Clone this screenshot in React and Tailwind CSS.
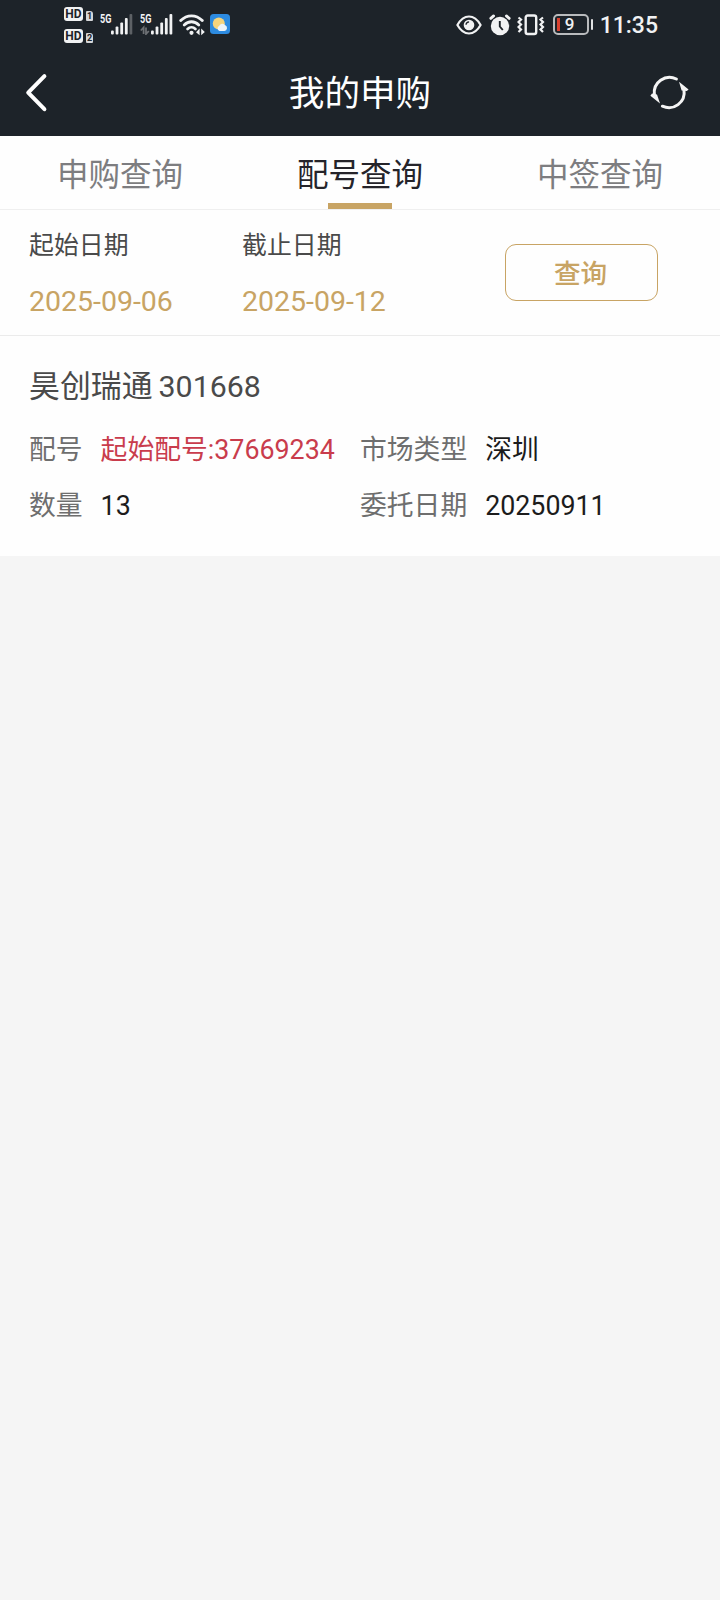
import React from 'react'

const tabs = [
  { key: 'apply', label: '申购查询' },
  { key: 'allot', label: '配号查询' },
  { key: 'win', label: '中签查询' },
]

const record = {
  name: '昊创瑞通',
  code: '301668',
  allotNo: '起始配号:37669234',
  market: '深圳',
  amount: '13',
  date: '20250911',
}

function HdBadge({ n }) {
  return (
    <div className="flex items-end gap-[3px]">
      <div className="flex h-[14px] w-[19px] items-center justify-center rounded-[3px] bg-[#f1f2f3] text-[12px] font-bold leading-none text-[#1d2329]">
        HD
      </div>
      <div className="flex h-[10px] w-[7px] items-center justify-center rounded-[1px] rounded-tr-[3px] bg-[#d5d7d9] text-[9px] font-bold leading-none text-[#1d2329]">
        {n}
      </div>
    </div>
  )
}

function Signal({ dimLast, data }) {
  return (
    <div className="relative h-[21px] w-[33px]">
      <span className="absolute left-0 top-0 origin-left scale-x-[0.7] text-[13px] font-bold leading-[10px] text-[#f1f2f3]">5G</span>
      <svg className="h-[21px] w-[33px]" viewBox="0 0 33 21">
        <g fill="#f1f2f3">
          <rect x="11" y="16.5" width="2.8" height="4" rx="1" />
          <rect x="15.6" y="12.5" width="2.8" height="8" rx="1" />
          <rect x="20.3" y="8.5" width="2.8" height="12" rx="1" />
          <rect x="24.9" y="4" width="2.8" height="16.5" rx="1" />
          <rect x="29.5" y="0" width="2.8" height="20.5" rx="1" opacity={dimLast ? 0.3 : 1} />
        </g>
        {data && (
          <g stroke="#6d7074" strokeWidth="1.8" fill="none">
            <path d="M3.6 20V13.5L0.8 16.5M6 13.5V20L8.8 17" />
          </g>
        )}
      </svg>
    </div>
  )
}

function Wifi() {
  return (
    <svg className="h-[22px] w-[26px]" viewBox="0 0 26 22">
      <g fill="none" stroke="#f1f2f3" strokeWidth="2.8" strokeLinecap="round">
        <path d="M1.7 6.6C8 .2 17 .2 23.3 6.6" />
        <path d="M5.2 10.9c4.2-4.2 10.4-4.2 14.6 0" />
        <path d="M8.6 15c2.3-2.3 5.5-2.3 7.8 0" />
      </g>
      <circle cx="12.5" cy="18.8" r="2.1" fill="#f1f2f3" />
      <path d="M20.6 14.6v6.6l-3.6-3zM22.2 14.6v6.6l3.6-3.2z" fill="#f1f2f3" />
    </svg>
  )
}

function Weather() {
  return (
    <svg className="h-5 w-5" viewBox="0 0 20 20">
      <rect width="20" height="20" rx="3.5" fill="#2d8be0" />
      <circle cx="8.8" cy="9.4" r="6" fill="#f5d47c" />
      <path d="M9.4 17a2.7 2.7 0 0 1-.3-5 3.5 3.5 0 0 1 6.2-.7A3 3 0 0 1 14.4 17z" fill="#edf3f8" />
    </svg>
  )
}

function Eye() {
  return (
    <svg className="h-5 w-[26px]" viewBox="0 0 26 20">
      <path d="M1.4 10C4.6 4.3 8.6 1.5 13 1.5S21.4 4.3 24.6 10C21.4 15.7 17.4 18.5 13 18.5S4.6 15.7 1.4 10z" fill="none" stroke="#f1f2f3" strokeWidth="2.2" strokeLinejoin="round" />
      <circle cx="13" cy="10" r="5.3" fill="#f1f2f3" />
      <path d="M10 9.8a3.2 3.2 0 0 1 3.1-3" fill="none" stroke="#1d2329" strokeWidth="1.3" />
    </svg>
  )
}

function Alarm() {
  return (
    <svg className="h-[22px] w-[22px]" viewBox="0 0 22 22">
      <circle cx="11" cy="12" r="9.2" fill="#f1f2f3" />
      <path d="M1.8 4.4L4.6 1.9M20.2 4.4L17.4 1.9" stroke="#f1f2f3" strokeWidth="2.8" strokeLinecap="round" />
      <path d="M10.8 7v5.5l3 3.5" fill="none" stroke="#1d2329" strokeWidth="1.9" />
    </svg>
  )
}

function Vibrate() {
  return (
    <svg className="h-[22px] w-7" viewBox="0 0 28 22">
      <rect x="8.7" y="1.5" width="10.5" height="18.5" rx="2" fill="none" stroke="#f1f2f3" strokeWidth="2.4" />
      <path d="M1.5 3.5l2.5 2L1.5 8 4 10.500 1.500 13 4 15.500 1.500 18M26 3.500l-2.500 2L26 8l-2.500 2.500L26 13l-2.500 2.500L26 18" fill="none" stroke="#f1f2f3" strokeWidth="2.2" />
    </svg>
  )
}

function Battery() {
  return (
    <div className="flex items-center gap-[2px]">
      <div className="flex h-[21px] w-9 items-center rounded-[5px] border-2 border-[#b9bbbd] pl-[2px]">
        <div className="h-[13px] w-[3px] bg-[#d9402f]" />
        <span className="ml-[5px] text-[17px] font-medium leading-none text-[#f1f2f3]">9</span>
      </div>
      <div className="h-[11px] w-[2px] rounded-sm bg-[#e0e1e2]" />
    </div>
  )
}

function StatusBar() {
  return (
    <div className="flex h-[49px] items-start justify-between pl-[64px] pr-[62px]">
      <div className="flex">
        <div className="mt-[7px] flex flex-col gap-[8px]">
          <HdBadge n="1" />
          <HdBadge n="2" />
        </div>
        <div className="ml-[7px] mt-[14px] flex">
          <Signal dimLast />
          <div className="ml-[7px]"><Signal data /></div>
          <div className="ml-[6px]"><Wifi /></div>
          <div className="ml-[5px]"><Weather /></div>
        </div>
      </div>
      <div className="mt-[14px] flex h-[21px] items-center">
        <Eye />
        <div className="ml-[7px]"><Alarm /></div>
        <div className="ml-[6px]"><Vibrate /></div>
        <div className="ml-[8px]"><Battery /></div>
        <span className="ml-[7px] pt-[2px] text-[23px] font-medium leading-none text-[#f1f2f3]">11:35</span>
      </div>
    </div>
  )
}

function Header() {
  return (
    <div className="flex h-[87px] items-center justify-between pl-[25px] pr-[31px] text-white">
      <svg className="h-10 w-6" viewBox="0 0 24 40" fill="none" stroke="currentColor" strokeWidth="4" strokeLinecap="round" strokeLinejoin="round">
        <path d="M19.4 3.2L3.2 19.7l16.2 16.5" />
      </svg>
      <h1 className="pl-[22px] pt-[5px] text-[35.6px] leading-none">我的申购</h1>
      <svg className="h-10 w-10" viewBox="0 0 40 40" fill="none" stroke="#f4f4f4" strokeWidth="3">
        <path d="M5.4 21.8A15.3 15.3 0 0 1 27.4 6" strokeLinecap="round" />
        <path d="M35 17A15.3 15.3 0 0 1 13.4 33.2" strokeLinecap="round" />
        <path d="M30 8.8l9.6 7.6-1.8 1.6-5.2-.5zM11 30.6L1.4 22.8l1.6-2.2 5 1z" fill="#f4f4f4" stroke="none" />
      </svg>
    </div>
  )
}

function DateField({ label, value }) {
  return (
    <div className="w-[213px]">
      <div className="text-[24.9px] leading-[30px] text-[#4a4a4a]">{label}</div>
      <div className="mt-[26px] text-[28.5px] leading-[30px] text-[#c8a464]">{value}</div>
    </div>
  )
}

function Cell({ label, value, red }) {
  return (
    <div className="flex gap-[18px] whitespace-nowrap">
      <span className="text-[#6e6e6e]">{label}</span>
      <span className={red ? 'text-[#c93c4c]' : 'text-[#1c1c1c]'}>{value}</span>
    </div>
  )
}

export default function App() {
  return (
    <div className="min-h-[1600px] w-[720px] bg-[#f5f5f5] font-[Roboto,'Noto_Sans_CJK_SC',sans-serif]">
      <div className="bg-[#1d2329]">
        <StatusBar />
        <Header />
      </div>

      <div className="grid h-[74px] grid-cols-3 border-b border-[#efefef] bg-[#fefefe]">
        {tabs.map((t) => (
          <div key={t.key} className="flex flex-col items-center justify-between">
            <span className={t.key === 'allot' ? 'pt-[17px] text-[31.5px] leading-[46px] text-[#25242a]' : 'pt-[17px] text-[31.5px] leading-[46px] text-[#7d7d80]'}>
              {t.label}
            </span>
            {t.key === 'allot' && <div className="h-[6px] w-16 bg-[#c8a464]" />}
          </div>
        ))}
      </div>

      <div className="flex h-[126px] items-start border-b border-[#ebebeb] bg-[#fefefe] pl-[29px] pt-[21px]">
        <DateField label="起始日期" value="2025-09-06" />
        <DateField label="截止日期" value="2025-09-12" />
        <button className="ml-[50px] mt-[13px] h-[57px] w-[153px] rounded-[11px] border border-[#c8a464] pr-[2px] pt-[3px] text-[26.6px] font-medium leading-none text-[#c8a464]">
          查询
        </button>
      </div>

      <div className="h-[220px] bg-[#fefefe] pl-[29px] pt-[31px]">
        <div className="flex gap-[6px] leading-[40px] text-[#4a4a4a]">
          <span className="text-[30.9px]">{record.name}</span>
          <span className="text-[30.3px]">{record.code}</span>
        </div>
        <div className="mt-[23px] grid grid-cols-[331px_1fr] gap-y-[16px] text-[26.8px] leading-[40px]">
          <Cell label="配号" value={record.allotNo} red />
          <Cell label="市场类型" value={record.market} />
          <Cell label="数量" value={record.amount} />
          <Cell label="委托日期" value={record.date} />
        </div>
      </div>
    </div>
  )
}
